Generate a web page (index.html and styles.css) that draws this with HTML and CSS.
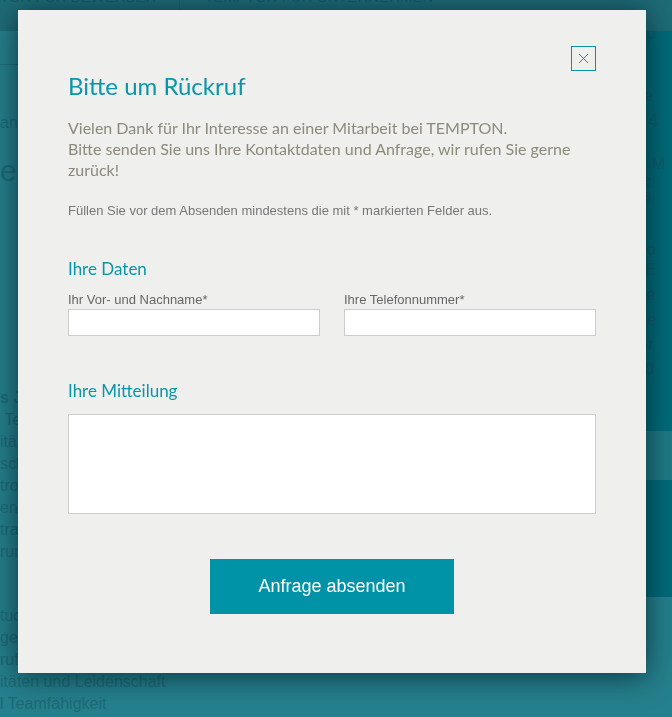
FILE: index.html
```
<!DOCTYPE html>
<html lang="de">
<head>
<meta charset="utf-8">
<title>Bitte um Rückruf</title>
<link rel="stylesheet" href="styles.css">
</head>
<body>
<div class="page">
  <nav class="topnav">
    <span class="nav-item first">TON FÜR BEWERBER</span>
    <span class="nav-sep"></span>
    <span class="nav-item">TEMPTON FÜR UNTERNEHMEN</span>
  </nav>
  <div class="main">
    <div class="left">
      <div class="rule"></div>
      <div class="crumb">ang</div>
      <div class="big">ec</div>
      <ul class="list list-a">
        <li class="bold">s J</li>
        <li>&nbsp;Te</li>
        <li>itä</li>
        <li>sch</li>
        <li>tro</li>
        <li>en</li>
        <li>trag</li>
        <li>run</li>
      </ul>
      <ul class="list list-b">
        <li>tud</li>
        <li>gen</li>
        <li>rufs</li>
        <li>itäten und Leidenschaft</li>
        <li>l Teamfähigkeit</li>
      </ul>
    </div>
    <aside class="side">
      <div class="side-top">Sp</div>
      <div class="side-label">Te</div>
      <div class="side-phone">+4</div>
      <div class="side-label mail">E-M</div>
      <div class="side-link">be</div>
      <div class="side-link">ha</div>
      <div class="side-label post">Po</div>
      <div class="side-line">TE</div>
      <div class="side-line sp">Pe</div>
      <div class="side-line sp">He</div>
      <div class="side-line sp">Gr</div>
      <div class="side-line sp">30</div>
      <div class="side-box"></div>
    </aside>
  </div>
</div>

<div class="overlay">
  <div class="modal">
    <button class="close" type="button" aria-label="Schließen">
      <svg width="11" height="11" viewBox="0 0 11 11"><path d="M1 1 L10 10 M10 1 L1 10" stroke="#0a93a6" stroke-width="1" fill="none"/></svg>
    </button>
    <h2 class="title">Bitte um Rückruf</h2>
    <p class="intro">Vielen Dank für Ihr Interesse an einer Mitarbeit bei TEMPTON.<br>Bitte senden Sie uns Ihre Kontaktdaten und Anfrage, wir rufen Sie gerne zurück!</p>
    <p class="note">Füllen Sie vor dem Absenden mindestens die mit * markierten Felder aus.</p>
    <h3 class="section">Ihre Daten</h3>
    <div class="fields">
      <label class="field">
        <span class="label">Ihr Vor- und Nachname*</span>
        <input class="input" type="text">
      </label>
      <label class="field">
        <span class="label">Ihre Telefonnummer*</span>
        <input class="input" type="text">
      </label>
    </div>
    <h3 class="section msg">Ihre Mitteilung</h3>
    <textarea class="textarea"></textarea>
    <div class="actions">
      <button class="submit" type="button">Anfrage absenden</button>
    </div>
  </div>
</div>
</body>
</html>
```
FILE: styles.css
```
html, body {
  margin: 0;
  padding: 0;
}
body {
  width: 672px;
  height: 717px;
  overflow: hidden;
  background: #25808d;
  font-family: "Liberation Sans", Arial, sans-serif;
}
.page {
  height: 717px;
  overflow: hidden;
  color: #1d6a76;
}
.topnav {
  height: 31px;
  background: #1e6c77;
  display: flex;
  align-items: flex-start;
  overflow: hidden;
  font-size: 15px;
  line-height: 18px;
  color: #175c66;
}
.nav-item {
  margin-top: -12px;
  white-space: nowrap;
}
.nav-sep {
  width: 1px;
  height: 31px;
  background: #1a6570;
  margin: 0 24px 0 23px;
}
.main {
  display: flex;
  justify-content: space-between;
}
.left {
  width: 300px;
  font-size: 16px;
}
.rule {
  height: 1px;
  background: #1f6f7a;
  margin-top: 33px;
}
.crumb {
  margin-top: 48px;
  line-height: 20px;
}
.big {
  font-size: 30px;
  line-height: 36px;
  margin-top: 20px;
}
.list {
  list-style: none;
  margin: 0;
  padding: 0;
  line-height: 22px;
}
.list-a {
  margin-top: 198px;
}
.list-b {
  margin-top: 42px;
}
.bold {
  font-weight: bold;
}
.side {
  width: 36px;
  height: 566px;
  background: #006b78;
  padding-left: 21px;
  color: #0f5e69;
  font-size: 16px;
  line-height: 18px;
  overflow: hidden;
}
.side-top {
  margin-top: -6px;
}
.side-label {
  margin-top: 44px;
}
.side-phone {
  font-size: 20px;
  margin-top: 6px;
}
.side-label.mail {
  margin-top: 26px;
}
.side-link {
  text-decoration: underline;
  font-size: 14px;
  line-height: 15px;
}
.side-label.post {
  margin-top: 38px;
}
.side-line {
  margin-top: 2px;
}
.side-line.sp {
  margin-top: 7px;
}
.side-box {
  height: 49px;
  background: #1f7a86;
  margin-top: 52px;
}

/* overlay + modal */
.overlay {
  position: fixed;
  inset: 0;
  padding: 10px 0 0 18px;
}
.modal {
  position: relative;
  width: 628px;
  box-sizing: border-box;
  background: #efefed;
  padding: 61px 50px 59px;
  box-shadow: 0 3px 28px rgba(0, 20, 30, 0.7);
}
.close {
  position: absolute;
  top: 36px;
  right: 50px;
  width: 25px;
  height: 25px;
  padding: 0;
  border: 1px solid #0a93a6;
  background: transparent;
  display: flex;
  align-items: center;
  justify-content: center;
}
.close svg {
  display: block;
}
.title {
  margin: 0;
  font-family: Lato, "Open Sans", sans-serif;
  font-weight: normal;
  font-size: 24px;
  line-height: 30px;
  color: #0a96aa;
}
.intro {
  margin: 16px 0 0;
  font-family: Lato, "Open Sans", sans-serif;
  font-size: 16px;
  line-height: 21px;
  color: #8b8a7b;
}
.note {
  margin: 23px 0 0;
  font-size: 13px;
  line-height: 16px;
  color: #777777;
}
.section {
  margin: 39px 0 0;
  font-family: Lato, "Open Sans", sans-serif;
  font-weight: normal;
  font-size: 17px;
  line-height: 22px;
  color: #0a96aa;
}
.section.msg {
  margin-top: 44px;
}
.fields {
  display: grid;
  grid-template-columns: 1fr 1fr;
  column-gap: 24px;
  margin-top: 13px;
}
.field {
  display: flex;
  flex-direction: column;
}
.label {
  font-size: 13px;
  line-height: 14px;
  color: #666666;
  margin-bottom: 2px;
}
.input {
  display: block;
  width: 100%;
  height: 27px;
  box-sizing: border-box;
  margin: 0;
  border: 1px solid #cccccc;
  background: #ffffff;
}
.textarea {
  display: block;
  width: 100%;
  height: 100px;
  box-sizing: border-box;
  margin: 12px 0 0;
  border: 1px solid #cccccc;
  background: #ffffff;
  resize: none;
}
.actions {
  display: flex;
  justify-content: center;
  margin-top: 45px;
}
.submit {
  width: 244px;
  height: 55px;
  border: 0;
  background: #0092a6;
  color: #ffffff;
  font-family: "Liberation Sans", Arial, sans-serif;
  font-size: 18px;
}
```
